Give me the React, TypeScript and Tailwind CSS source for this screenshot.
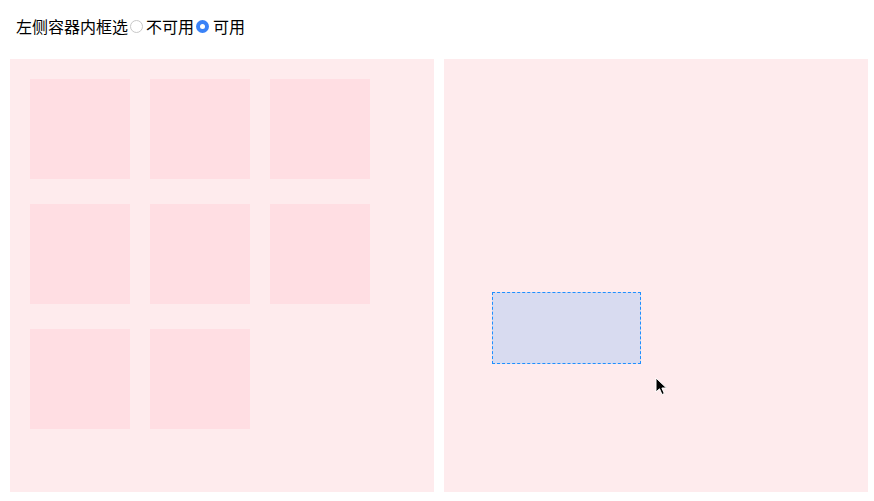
import React from "react";

export default function App() {
  const squares = Array.from({ length: 8 });
  return (
    <div className="w-[874px] h-[501px] bg-white relative overflow-hidden" style={{ fontFamily: '"Noto Sans CJK SC", "Noto Sans", sans-serif' }}>
      <div className="h-[59px] pl-4 pt-[14px] flex items-start">
        <div className="flex items-center h-6 text-[16px] leading-6 text-black">
          <span>左侧容器内框选</span>
          <span className="ml-[2px] mr-[3px] w-[13px] h-[13px] rounded-full border border-[#c8c8c8] bg-white box-border" />
          <span>不可用</span>
          <span className="ml-[2px] mr-[4px] w-[13px] h-[13px] rounded-full bg-[#3a82f7] flex items-center justify-center">
            <span className="w-[5px] h-[5px] rounded-full bg-white" />
          </span>
          <span>可用</span>
        </div>
      </div>
      <div className="flex gap-[10px] pl-[10px]">
        <div className="w-[424px] h-[433px] bg-[#feebed] p-5">
          <div className="grid grid-cols-[100px_100px_100px] gap-x-5 gap-y-[25px]">
            {squares.map((_, i) => (
              <div key={i} className="w-[100px] h-[100px] bg-[#ffdee3]" />
            ))}
          </div>
        </div>
        <div className="w-[424px] h-[433px] bg-[#feebed] relative">
          <div className="absolute left-[48px] top-[233px] w-[149px] h-[72px] bg-[#d8dbf0] border border-dashed border-[#1e8fff]" />
          <svg className="absolute left-[211px] top-[318px]" width="14" height="20" viewBox="0 0 14 20">
            <path d="M1 1 L1 15 L4.5 11.8 L7 17.5 L9.3 16.5 L6.9 11 L11.5 11 Z" fill="#000" stroke="#fff" strokeWidth="1" strokeLinejoin="round" />
          </svg>
        </div>
      </div>
    </div>
  );
}
